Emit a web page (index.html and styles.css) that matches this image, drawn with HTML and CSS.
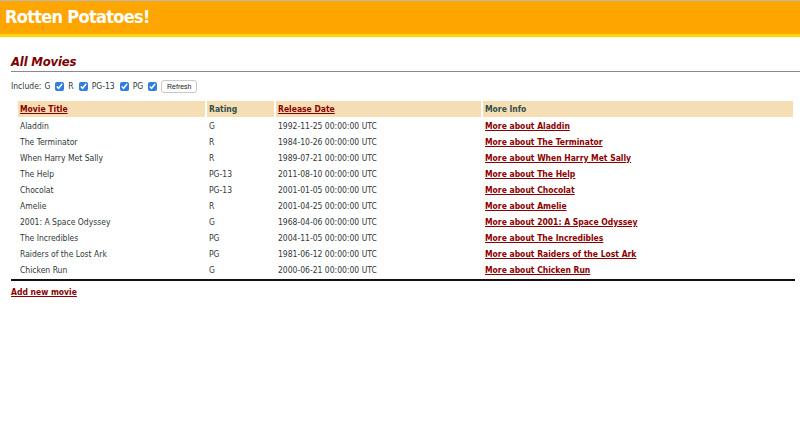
FILE: index.html
```html
<!DOCTYPE html>
<html>
<head>
<meta charset="utf-8">
<title>Rotten Potatoes!</title>
<link rel="stylesheet" href="styles.css">
</head>
<body>
<div class="header"><h1 class="brand">Rotten Potatoes!</h1></div>
<div class="main">
  <h2 class="page-title">All Movies</h2>
  <form class="filter">
    <span class="lbl">Include:</span>
    <span class="lbl">G</span><input type="checkbox" checked>
    <span class="lbl">R</span><input type="checkbox" checked>
    <span class="lbl">PG-13</span><input type="checkbox" checked>
    <span class="lbl">PG</span><input type="checkbox" checked>
    <button type="button" class="refresh">Refresh</button>
  </form>
  <table class="movies">
    <thead>
      <tr>
        <th class="c-title"><a href="#">Movie Title</a></th>
        <th class="c-rating">Rating</th>
        <th class="c-date"><a href="#">Release Date</a></th>
        <th class="c-info">More Info</th>
      </tr>
    </thead>
    <tbody>
      <tr><td>Aladdin</td><td>G</td><td>1992-11-25 00:00:00 UTC</td><td><a href="#">More about Aladdin</a></td></tr>
      <tr><td>The Terminator</td><td>R</td><td>1984-10-26 00:00:00 UTC</td><td><a href="#">More about The Terminator</a></td></tr>
      <tr><td>When Harry Met Sally</td><td>R</td><td>1989-07-21 00:00:00 UTC</td><td><a href="#">More about When Harry Met Sally</a></td></tr>
      <tr><td>The Help</td><td>PG-13</td><td>2011-08-10 00:00:00 UTC</td><td><a href="#">More about The Help</a></td></tr>
      <tr><td>Chocolat</td><td>PG-13</td><td>2001-01-05 00:00:00 UTC</td><td><a href="#">More about Chocolat</a></td></tr>
      <tr><td>Amelie</td><td>R</td><td>2001-04-25 00:00:00 UTC</td><td><a href="#">More about Amelie</a></td></tr>
      <tr><td>2001: A Space Odyssey</td><td>G</td><td>1968-04-06 00:00:00 UTC</td><td><a href="#">More about 2001: A Space Odyssey</a></td></tr>
      <tr><td>The Incredibles</td><td>PG</td><td>2004-11-05 00:00:00 UTC</td><td><a href="#">More about The Incredibles</a></td></tr>
      <tr><td>Raiders of the Lost Ark</td><td>PG</td><td>1981-06-12 00:00:00 UTC</td><td><a href="#">More about Raiders of the Lost Ark</a></td></tr>
      <tr><td>Chicken Run</td><td>G</td><td>2000-06-21 00:00:00 UTC</td><td><a href="#">More about Chicken Run</a></td></tr>
    </tbody>
  </table>
  <a class="add" href="#">Add new movie</a>
</div>
</body>
</html>
```
FILE: styles.css
```css
html, body {
  margin: 0;
  padding: 0;
  background: #fff;
}
body {
  font-family: "DejaVu Sans Condensed", "DejaVu Sans", sans-serif;
  font-size: 8.5px;
  color: #2f3838;
}
.header {
  background: #ffa500;
  border-top: 1px solid #b8b8b8;
  border-bottom: 3px solid #ffd700;
  box-sizing: border-box;
  height: 37px;
  display: flex;
  align-items: center;
  padding-left: 5px;
}
.brand {
  margin: 0;
  color: #fff;
  font-size: 18px;
  letter-spacing: -0.7px;
  font-weight: bold;
  font-family: "DejaVu Sans Condensed", "DejaVu Sans", sans-serif;
  position: relative;
  top: -1px;
}
.main {
  padding-left: 11px;
}
.page-title {
  margin: 17px 0 0 0;
  font-size: 13px;
  letter-spacing: -0.2px;
  font-style: italic;
  font-weight: bold;
  color: #7d0000;
  line-height: 16px;
  padding-bottom: 1px;
  border-bottom: 1px solid #8a8a8a;
}
.filter {
  margin: 7px 0 0 0;
  display: flex;
  align-items: center;
  height: 14px;
}
.filter .lbl {
  margin-right: 3px;
}
.filter input {
  width: 9px;
  height: 9px;
  margin: 0 4px 0 2px;
  accent-color: #2f7de1;
}
.refresh {
  margin-left: 0;
  height: 13px;
  width: 36px;
  padding: 0;
  font-family: "Liberation Sans", sans-serif;
  font-size: 7px;
  background: #fff;
  border: 1px solid #c8c8c8;
  border-radius: 3px;
  color: #222;
}
.movies {
  margin-top: 6px;
  width: 784px;
  border-spacing: 2px;
  padding-left: 5px;
  border-bottom: 2px solid #111;
  table-layout: fixed;
}
.movies th, .movies td {
  text-align: left;
  padding: 0 2px;
  height: 14px;
  line-height: 14px;
  white-space: nowrap;
}
.movies td {
  height: 13.8px;
}
.movies th {
  background: #f5deb3;
  font-weight: bold;
  color: #2f4f4f;
  height: 16px;
}
.c-title { width: 183px; }
.c-rating { width: 63px; }
.c-date { width: 201px; }
a {
  color: #8b0000;
  font-weight: bold;
}
.add {
  display: inline-block;
  margin-top: 6px;
}
```
